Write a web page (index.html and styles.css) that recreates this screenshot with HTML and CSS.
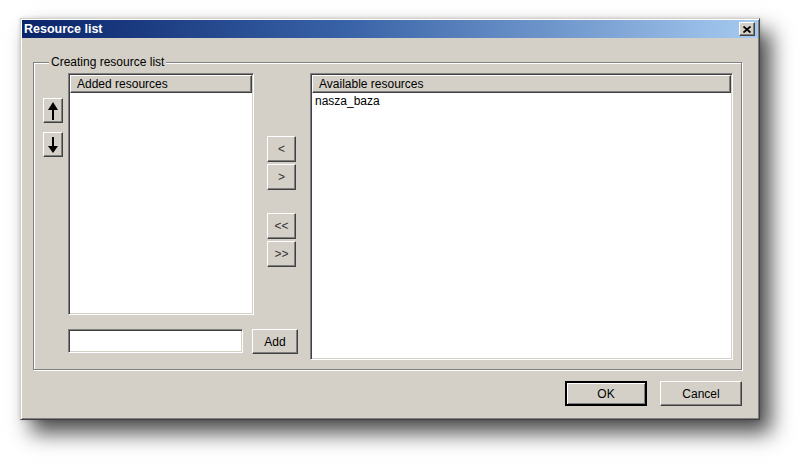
FILE: index.html
```html
<!DOCTYPE html>
<html lang="en">
  <head>
    <meta charset="UTF-8" />
    <title>Resource list</title>
    <link rel="stylesheet" href="styles.css">
  </head>
  <body>
    <div class="window">
      <div class="dialog">
        <div class="titlebar">
          <span class="title">Resource list</span>
          <button class="close" title="Close">
            <svg width="8" height="7" viewBox="0 0 8 7">
              <path d="M0.5 0.5 L7.5 6.5 M7.5 0.5 L0.5 6.5" stroke="#000" stroke-width="1.8" fill="none" />
            </svg>
          </button>
        </div>

        <div class="dialog-body">
          <fieldset class="group">
            <legend>Creating resource list</legend>

            <div class="group-grid">
              <div class="order-col">
                <button class="btn btn-order" title="Move up">
                  <svg width="10" height="18" viewBox="0 0 10 18">
                    <path d="M5 0 L10 8 L6 8 L6 18 L4 18 L4 8 L0 8 Z" fill="#000" />
                  </svg>
                </button>
                <button class="btn btn-order" title="Move down">
                  <svg width="10" height="16" viewBox="0 0 10 16">
                    <path d="M4 0 L6 0 L6 9 L10 9 L5 16 L0 9 L4 9 Z" fill="#000" />
                  </svg>
                </button>
              </div>

              <div class="listbox added">
                <div class="list-header">Added resources</div>
                <div class="list-items"></div>
              </div>

              <div class="move-col">
                <button class="btn btn-move">&lt;</button>
                <button class="btn btn-move">&gt;</button>
                <button class="btn btn-move spaced">&lt;&lt;</button>
                <button class="btn btn-move">&gt;&gt;</button>
              </div>

              <div class="listbox available">
                <div class="list-header">Available resources</div>
                <div class="list-items">
                  <div class="item">nasza_baza</div>
                </div>
              </div>

              <div class="add-row">
                <input type="text" class="textbox" />
                <button class="btn btn-add">Add</button>
              </div>
            </div>
          </fieldset>

          <div class="footer">
            <button class="btn btn-footer default">OK</button>
            <button class="btn btn-footer">Cancel</button>
          </div>
        </div>
      </div>
    </div>
  </body>
</html>
```

FILE: styles.css
```css
html {
  background-color: #fff;
}
body {
  margin: 0;
  min-height: 465px;
  box-sizing: border-box;
  padding: 18px 0 0 20px;
  background-color: #fff;
  font-family: 'Liberation Sans', Arial, sans-serif;
  font-size: 12px;
  color: #000;
}
.window {
  width: 740px;
  height: 402px;
  box-shadow: 11px 13px 20px rgba(0, 0, 0, 0.7), 0 0 4px rgba(0, 0, 0, 0.15);
}
.dialog {
  height: 100%;
  box-sizing: border-box;
  background-color: #d4d0c8;
  border: 1px solid;
  border-color: #d4d0c8 #404040 #404040 #d4d0c8;
  padding: 1px;
  box-shadow: inset 1px 1px 0 #fff, inset -1px -1px 0 #808080;
}
.titlebar {
  height: 18px;
  display: flex;
  align-items: center;
  justify-content: space-between;
  padding: 0 3px 0 2px;
  background: linear-gradient(to right, #0a246a, #3a64a8 45%, #a6caf0);
}
.title {
  color: #fff;
  font-weight: bold;
  font-size: 12.5px;
}
.close {
  width: 16px;
  height: 14px;
  padding: 0;
  display: flex;
  align-items: center;
  justify-content: center;
  background-color: #d4d0c8;
  border: 1px solid;
  border-color: #fff #404040 #404040 #fff;
  box-shadow: inset -1px -1px 0 #808080;
}
.dialog-body {
  padding: 17px 16px 12px 11px;
}
.group {
  margin: 0;
  padding: 4px 8px 9px 9px;
  border: 1px solid #808080;
  box-shadow: 1px 1px 0 #fff, inset 1px 1px 0 #fff;
}
.group legend {
  padding: 0 2px;
  margin-left: 6px;
  line-height: 14px;
  background-color: #d4d0c8;
}
.group-grid {
  display: grid;
  grid-template-columns: 25px 199px 43px 423px;
  grid-template-rows: 242px 31px;
  row-gap: 14px;
  justify-items: start;
}
.order-col {
  grid-column: 1;
  grid-row: 1;
  display: flex;
  flex-direction: column;
  gap: 9px;
  padding-top: 25px;
}
.group-grid .added {
  grid-column: 2;
  grid-row: 1;
  width: 186px;
}
.move-col {
  grid-column: 3;
  grid-row: 1;
  display: flex;
  flex-direction: column;
  gap: 2px;
  padding-top: 63px;
}
.group-grid .available {
  grid-column: 4;
  grid-row: 1 / 3;
  width: 423px;
}
.add-row {
  grid-column: 2 / 4;
  grid-row: 2;
  width: 230px;
  display: flex;
  justify-content: space-between;
  align-items: flex-start;
}
.btn {
  font-family: inherit;
  font-size: 12px;
  color: #000;
  background-color: #d4d0c8;
  border: 1px solid;
  border-color: #fff #404040 #404040 #fff;
  box-shadow: inset -1px -1px 0 #808080;
  padding: 0;
  box-sizing: border-box;
}
.btn-order {
  width: 20px;
  height: 25px;
  display: flex;
  align-items: center;
  justify-content: center;
}
.btn-move {
  width: 29px;
  height: 26px;
  color: #333;
}
.btn-move.spaced {
  margin-top: 21px;
}
.btn-add {
  width: 46px;
  height: 25px;
}
.listbox {
  display: flex;
  flex-direction: column;
  box-sizing: border-box;
  background-color: #fff;
  border: 1px solid;
  border-color: #808080 #fff #fff #808080;
  box-shadow: inset 1px 1px 0 #404040, inset -1px -1px 0 #d4d0c8;
  padding: 1px;
}
.list-header {
  height: 18px;
  line-height: 16px;
  box-sizing: border-box;
  padding-left: 6px;
  background-color: #d4d0c8;
  border: 1px solid;
  border-color: #fff #404040 #404040 #fff;
  box-shadow: inset -1px -1px 0 #808080;
}
.list-items {
  flex: 1;
}
.item {
  padding: 1px 3px;
  line-height: 14px;
}
.textbox {
  width: 175px;
  height: 24px;
  box-sizing: border-box;
  margin: 0;
  border: 1px solid;
  border-color: #808080 #fff #fff #808080;
  box-shadow: inset 1px 1px 0 #404040, inset -1px -1px 0 #d4d0c8;
  background-color: #fff;
  font-family: inherit;
  font-size: 12px;
}
.footer {
  margin-top: 11px;
  display: flex;
  justify-content: flex-end;
  gap: 13px;
}
.btn-footer {
  width: 82px;
  height: 25px;
}
.btn-footer.default {
  border: 2px solid;
  border-color: #000;
  box-shadow: inset 1px 1px 0 #fff, inset -1px -1px 0 #808080;
}
```
